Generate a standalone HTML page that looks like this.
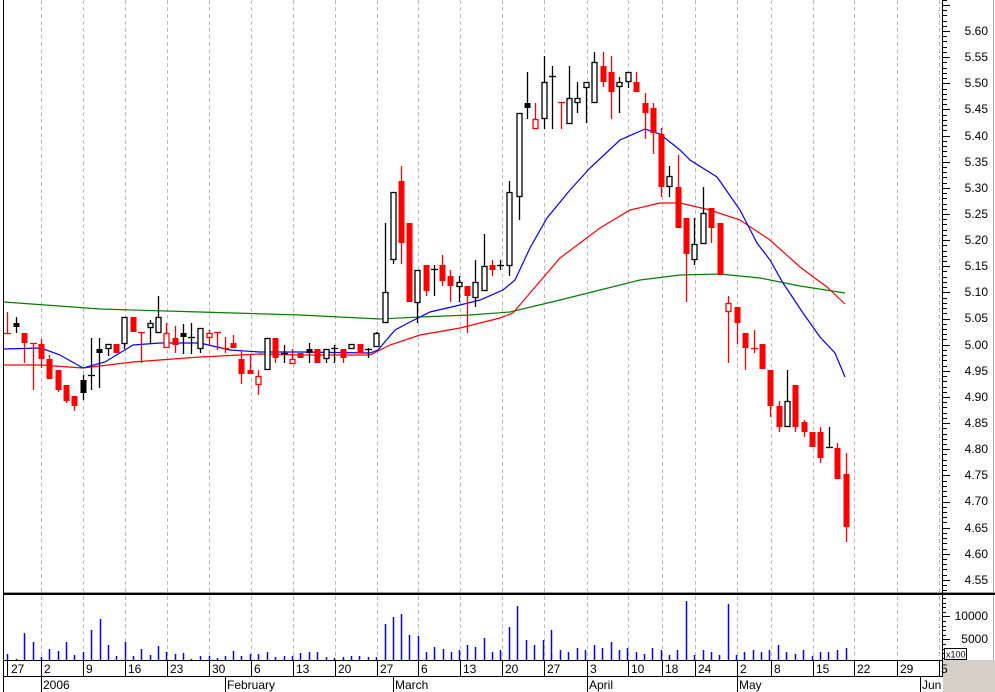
<!DOCTYPE html>
<html><head><meta charset="utf-8"><style>
html,body{margin:0;padding:0;background:#fff;}
svg{display:block;font-family:"Liberation Sans",Arial,sans-serif;}
</style></head><body>
<svg id="s" width="995" height="692" viewBox="0 0 995 692" xmlns="http://www.w3.org/2000/svg">
<rect x="0" y="0" width="995" height="692" fill="#fff"/>
<g id="grid"></g>
<g id="ma"></g>
<g id="cd"></g>
<g id="vol"></g>
<g id="axis"></g>
<line x1="3.5" y1="0" x2="3.5" y2="692" stroke="#000"/>
<line x1="993.5" y1="0" x2="993.5" y2="660" stroke="#aaa"/>
<line x1="4" y1="592.5" x2="995" y2="592.5" stroke="#999"/>
<line x1="4" y1="594" x2="995" y2="594" stroke="#000" stroke-width="2"/>
<line x1="942.5" y1="0" x2="942.5" y2="676" stroke="#000"/>
<line x1="4" y1="660.5" x2="943" y2="660.5" stroke="#000"/>
<line x1="4" y1="676.5" x2="943" y2="676.5" stroke="#000"/>
<rect x="943" y="660" width="52" height="32" fill="#d4d0c8"/>
<rect x="944.5" y="648.5" width="22" height="11" fill="#fff" stroke="#000"/>
<text x="946" y="657.5" font-size="9">x100</text>
<g font-size="12" fill="#000" text-anchor="end">
<text x="988" y="35">5.60</text><text x="988" y="61">5.55</text><text x="988" y="87">5.50</text><text x="988" y="113">5.45</text><text x="988" y="140">5.40</text><text x="988" y="166">5.35</text><text x="988" y="192">5.30</text><text x="988" y="218">5.25</text><text x="988" y="244">5.20</text><text x="988" y="270">5.15</text><text x="988" y="296">5.10</text><text x="988" y="322">5.05</text><text x="988" y="349">5.00</text><text x="988" y="375">4.95</text><text x="988" y="401">4.90</text><text x="988" y="427">4.85</text><text x="988" y="453">4.80</text><text x="988" y="479">4.75</text><text x="988" y="505">4.70</text><text x="988" y="532">4.65</text><text x="988" y="558">4.60</text><text x="988" y="584">4.55</text>
<text x="988" y="620">10000</text><text x="988" y="643">5000</text>
</g>
<g font-size="12" fill="#000">
<text x="11" y="673">27</text><text x="44" y="673">2</text><text x="86" y="673">9</text><text x="128" y="673">16</text><text x="170" y="673">23</text><text x="212" y="673">30</text><text x="254" y="673">6</text><text x="296" y="673">13</text><text x="338" y="673">20</text><text x="380" y="673">27</text><text x="421" y="673">6</text><text x="463" y="673">13</text><text x="505" y="673">20</text><text x="547" y="673">27</text><text x="590" y="673">3</text><text x="631" y="673">10</text><text x="665" y="673">18</text><text x="698" y="673">24</text><text x="740" y="673">2</text><text x="774" y="673">8</text><text x="816" y="673">15</text><text x="857" y="673">22</text><text x="900" y="673">29</text><text x="941" y="673">5</text>
<text x="43" y="689">2006</text><text x="227" y="689">February</text><text x="395" y="689">March</text><text x="589" y="689">April</text><text x="739" y="689">May</text><text x="922" y="689">Jun</text>
</g>
<g stroke="#000">
<line x1="7.5" y1="660" x2="7.5" y2="676"/>
<line x1="41.5" y1="677" x2="41.5" y2="692"/><line x1="225.5" y1="677" x2="225.5" y2="692"/><line x1="393.5" y1="677" x2="393.5" y2="692"/><line x1="587.5" y1="677" x2="587.5" y2="692"/><line x1="737.5" y1="677" x2="737.5" y2="692"/><line x1="920.5" y1="677" x2="920.5" y2="692"/>
</g>
<script>
(function(){
var NS="http://www.w3.org/2000/svg";
function el(p,t,a){var e=document.createElementNS(NS,t);for(var k in a)e.setAttribute(k,a[k]);p.appendChild(e);return e;}
var grid=document.getElementById('grid'),axis=document.getElementById('axis'),ma=document.getElementById('ma'),cd=document.getElementById('cd'),vol=document.getElementById('vol');
var gx=[41,83,125,167,209,251,293,335,377,418,460,502,544,587,628,662,695,737,771,813,854,897,939];
gx.forEach(function(x){
 el(grid,'line',{x1:x+.5,y1:0,x2:x+.5,y2:592,stroke:'#bbb','stroke-dasharray':'4,3'});
 el(grid,'line',{x1:x+.5,y1:596,x2:x+.5,y2:660,stroke:'#bbb','stroke-dasharray':'4,3'});
 el(axis,'line',{x1:x+.5,y1:660,x2:x+.5,y2:676,stroke:'#000'});
});
var step=26.14/5;
for(var i=-6;i<=115;i++){var y=Math.round(31+i*step)+.5;if(y<0||y>591)continue;
 el(axis,'line',{x1:942,y1:y,x2:(i%5==0?950:947),y2:y,stroke:'#000'});}
for(var y=598;y<=658;y+=4.6){var yy=Math.round(y)+.5;el(axis,'line',{x1:942,y1:yy,x2:946,y2:yy,stroke:'#000'});}
[616,639].forEach(function(y){el(axis,'line',{x1:942,y1:y+.5,x2:950,y2:y+.5,stroke:'#000'});});
function pl(pts,c){el(ma,'polyline',{points:pts.map(function(p){return p.join(',')}).join(' '),fill:'none',stroke:c,'stroke-width':1.2});}
pl([[4,302],[100,309],[200,312],[300,315],[380,319],[420,317],[470,315],[510,312],[560,300],[600,290],[640,280],[680,275],[720,274],[760,278],[800,286],[845,293]],'#008000');
pl([[4,365],[41,365],[83,368],[133,362],[200,357],[260,354],[300,355],[370,355],[390,345],[420,335],[460,328],[500,318],[513,313],[530,293],[560,258],[600,228],[630,210],[660,203],[680,203],[710,210],[740,220],[770,240],[800,267],[827,287],[845,304]],'#ff0000');
pl([[4,349],[41,348],[60,355],[83,368],[105,362],[133,345],[160,343],[200,343],[230,350],[260,352],[300,352],[370,353],[378,350],[395,330],[410,322],[430,312],[460,305],[480,300],[503,290],[515,280],[530,248],[547,218],[570,190],[590,168],[620,140],[645,129],[660,134],[680,150],[690,160],[717,177],[740,210],[757,243],[770,260],[783,283],[803,313],[820,337],[835,353],[845,377]],'#0000ff');
var C=[[7,312,333,333,333,'rc'],[16,317,333,323,327,'b'],[24,333,363,333,343,'r'],[33,343,390,343,343,'rc'],[41,339,368,344,359,'r'],[49,355,379,359,379,'r'],[58,370,392,370,390,'r'],[66,385,403,385,401,'r'],[74,396,411,396,406,'r'],[83,375,400,380,393,'b'],[91,338,390,375,375,'bc'],[99,338,388,349,353,'b'],[108,344,356,344,349,'w'],[116,344,353,344,353,'r'],[124,317,349,317,344,'w'],[133,317,332,317,332,'r'],[141,332,363,332,332,'rc'],[150,320,343,323,328,'w'],[158,296,333,317,333,'w'],[166,323,348,333,348,'rh'],[175,326,353,338,345,'r'],[183,324,354,333,337,'b'],[191,323,354,337,337,'bc'],[200,328,353,328,349,'w'],[209,330,345,333,338,'rh'],[217,332,350,332,332,'rc'],[225,337,353,348,348,'rc'],[233,335,348,343,348,'r'],[241,350,384,359,374,'r'],[250,355,374,370,374,'r'],[258,370,395,376,385,'rh'],[267,338,370,338,370,'w'],[275,338,363,338,358,'r'],[284,345,363,353,353,'bc'],[292,349,364,359,364,'rh'],[300,353,358,353,358,'r'],[309,343,363,349,353,'b'],[317,349,363,349,363,'r'],[326,349,363,349,359,'w'],[334,345,363,348,348,'bc'],[343,349,363,349,358,'r'],[351,344,349,344,349,'w'],[360,344,353,344,353,'r'],[368,348,358,349,349,'bc'],[376,332,347,333,347,'w'],[385,223,323,292,323,'w'],[393,192,264,192,260,'w'],[401,166,264,181,243,'r'],[409,223,302,223,302,'r'],[417,270,323,270,303,'w'],[426,265,296,265,291,'r'],[434,265,296,269,269,'bc'],[442,255,286,265,281,'r'],[450,270,302,276,286,'r'],[459,276,302,282,287,'w'],[467,286,333,286,296,'r'],[475,260,307,282,298,'w'],[484,234,291,266,291,'w'],[492,260,276,265,270,'r'],[500,260,270,265,265,'bc'],[509,181,276,192,266,'w'],[519,113,220,113,197,'w'],[527,72,119,103,108,'b'],[535,103,129,119,129,'rh'],[544,56,129,82,119,'w'],[552,66,129,76,76,'bc'],[561,102,129,102,102,'rc'],[569,66,124,98,124,'w'],[577,82,113,98,103,'w'],[586,82,123,82,88,'w'],[594,52,103,62,103,'w'],[603,52,87,66,82,'r'],[611,56,119,72,92,'r'],[619,77,113,82,87,'w'],[628,72,88,72,82,'w'],[636,72,92,82,92,'r'],[645,93,139,103,113,'r'],[653,103,154,108,133,'r'],[661,128,197,134,187,'r'],[669,166,197,176,187,'w'],[678,155,228,187,228,'r'],[686,218,302,218,254,'r'],[694,218,265,244,260,'w'],[703,187,244,213,244,'w'],[711,208,243,208,228,'r'],[720,223,275,223,275,'r'],[728,296,363,303,312,'rh'],[737,307,344,307,323,'r'],[745,333,370,333,348,'r'],[754,330,353,348,348,'rc'],[762,344,369,344,369,'r'],[770,370,417,370,406,'r'],[779,401,432,406,427,'r'],[787,370,427,401,427,'w'],[795,385,432,385,427,'r'],[804,420,437,422,432,'r'],[812,432,447,432,447,'r'],[820,427,463,432,458,'r'],[829,427,447,447,447,'bc'],[837,443,479,448,479,'r'],[846,453,542,474,527,'r']];
C.forEach(function(c){var x=c[0],k=c[5],col=(k.charAt(0)=='r')?'#ff0000':'#000';
 el(cd,'line',{x1:x+.5,y1:c[1],x2:x+.5,y2:c[2],stroke:col,'stroke-width':1.3});
 if(k=='rc'||k=='bc'){el(cd,'line',{x1:x-3,y1:c[3]+.5,x2:x+4,y2:c[3]+.5,stroke:col,'stroke-width':1.3});return;}
 var h=Math.max(c[4]-c[3],2);
 if(k=='r'||k=='b')el(cd,'rect',{x:x-2.5,y:c[3],width:6,height:h,fill:col});
 else el(cd,'rect',{x:x-2,y:c[3]+.5,width:5,height:h-1,fill:'#fff',stroke:col,'stroke-width':1.3});
});
var V=[[7,654],[16,659],[24,633],[33,642],[41,657],[49,649],[58,651],[66,642],[74,655],[83,652],[91,630],[100,619],[108,645],[116,656],[125,642],[133,656],[141,649],[150,655],[158,646],[166,652],[175,654],[183,653],[191,659],[200,656],[209,656],[217,658],[225,656],[233,651],[241,656],[250,654],[258,654],[267,652],[275,657],[284,656],[292,656],[300,653],[309,652],[317,652],[326,657],[334,658],[343,657],[351,656],[359,656],[368,657],[376,657],[385,624],[393,617],[401,614],[409,635],[418,636],[426,652],[434,647],[443,649],[451,652],[459,650],[467,645],[475,647],[484,638],[492,652],[500,650],[509,627],[517,606],[526,640],[534,645],[543,640],[551,630],[560,650],[568,652],[577,648],[585,650],[594,645],[602,648],[611,642],[619,650],[627,648],[636,652],[644,654],[652,648],[661,650],[669,655],[677,650],[686,601],[694,655],[703,650],[711,652],[719,655],[728,604],[736,655],[744,652],[753,650],[761,652],[769,650],[778,645],[786,652],[795,654],[803,650],[812,656],[820,652],[828,652],[837,650],[846,648]];
V.forEach(function(v){el(vol,'line',{x1:v[0]+.5,y1:v[1],x2:v[0]+.5,y2:660,stroke:'#0000ff','stroke-width':1.5});});
})();
</script>
</svg>
</body></html>
